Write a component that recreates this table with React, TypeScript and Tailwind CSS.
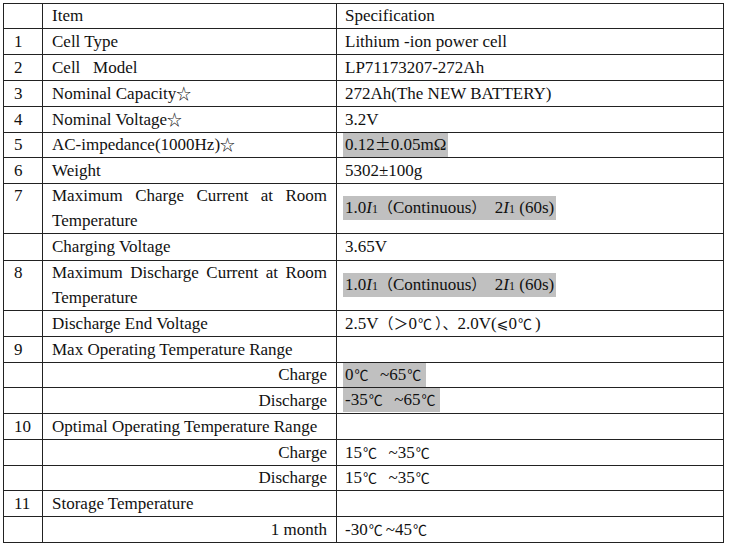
import React from "react";

type Row = {
  no?: string;
  item: React.ReactNode;
  spec?: React.ReactNode;
  right?: boolean;
  justify?: boolean;
  mark?: boolean;
  size?: "s" | "m" | "l";
};

const cjk = "font-['Noto_Sans_CJK_SC',sans-serif] leading-[0px]";

function Star() {
  return <span className={`${cjk} text-[15px]`}>☆</span>;
}

function Deg() {
  return <span className={`${cjk} text-[14px] ml-[1px] mr-[3px]`}>℃</span>;
}

function Current() {
  return (
    <>
      1.0<i>I</i>
      <span className="text-[12px] leading-[0px]">1</span>
      <span className={`${cjk} text-[15px]`}>（</span>
      Continuous
      <span className={`${cjk} text-[15px]`}>）</span>
      {"\u00a0\u00a0"}2<i>I</i>
      <span className="text-[12px] leading-[0px]">1</span> (60s)
    </>
  );
}

function Range({ from, to, gap = "\u00a0 ~" }: { from: string; to: string; gap?: string }) {
  return (
    <>
      {from}
      <Deg />
      {gap}
      {to}
      <Deg />
    </>
  );
}

const rows: Row[] = [
  { no: "1", item: "Cell Type", spec: "Lithium -ion power cell" },
  { no: "2", item: "Cell\u00a0\u00a0\u00a0Model", spec: "LP71173207-272Ah" },
  { no: "3", item: <>Nominal Capacity<Star /></>, spec: "272Ah(The NEW BATTERY)" },
  { no: "4", item: <>Nominal Voltage<Star /></>, spec: "3.2V" },
  {
    no: "5",
    item: <>AC-impedance(1000Hz)<Star /></>,
    spec: (
      <>
        0.12<span className={`${cjk} text-[16px]`}>±</span>0.05mΩ
      </>
    ),
    mark: true,
    size: "s",
  },
  { no: "6", item: "Weight", spec: "5302±100g" },
  { no: "7", item: "Maximum Charge Current at Room Temperature", spec: <Current />, justify: true, mark: true },
  { item: "Charging Voltage", spec: "3.65V", size: "l" },
  { no: "8", item: "Maximum Discharge Current at Room Temperature", spec: <Current />, justify: true, mark: true },
  {
    item: "Discharge End Voltage",
    spec: (
      <>
        2.5V<span className={`${cjk} text-[15px]`}>（＞</span>0<Deg />
        <span className={`${cjk} text-[15px]`}>）、</span>2.0V(
        <span className="font-['DejaVu_Sans',sans-serif] text-[14px] leading-[0px]">⩽</span>0<Deg />)
      </>
    ),
  },
  { no: "9", item: "Max Operating Temperature Range" },
  { item: "Charge", spec: <Range from="0" to="65" />, right: true, mark: true, size: "s" },
  { item: "Discharge", spec: <Range from="-35" to="65" />, right: true, mark: true },
  { no: "10", item: "Optimal Operating Temperature Range" },
  { item: "Charge", spec: <Range from="15" to="35" />, right: true },
  { item: "Discharge", spec: <Range from="15" to="35" />, right: true, size: "s" },
  { no: "11", item: "Storage Temperature" },
  { item: "1 month", spec: <Range from="-30" to="45" gap="~" />, right: true },
];

const lead = { s: "leading-[24px]", m: "leading-[25px]", l: "leading-[26px]" };

export default function App() {
  return (
    <div className="bg-white w-[731px] h-[547px] pt-[3px] pl-[3px]">
      <table className="table-fixed border-collapse w-[720px] text-[17px] text-[#111] font-['Liberation_Serif',serif]">
        <colgroup>
          <col className="w-[39px]" />
          <col className="w-[294px]" />
          <col className="w-[387px]" />
        </colgroup>
        <tbody>
          <tr className="leading-[24px]">
            <td className="border border-[#222] px-[9px] align-top" />
            <td className="border border-[#222] px-[9px] align-top">Item</td>
            <td className="border border-[#222] px-[8px] align-top">Specification</td>
          </tr>
          {rows.map((r, i) => (
            <tr key={i} className={r.justify ? "leading-[24.5px]" : lead[r.size ?? "m"]}>
              <td className="border border-[#222] pl-[10px] pr-0 align-top">{r.no}</td>
              <td
                className={`border border-[#222] pl-[9px] pr-[9px] align-top ${
                  r.right ? "text-right" : r.justify ? "text-justify" : "text-left"
                }`}
              >
                {r.item}
              </td>
              <td className="border border-[#222] pl-[8px] pr-[8px] align-middle whitespace-pre">
                {r.spec &&
                  (r.mark ? (
                    <span className="inline-block align-top bg-[#c0c0c0] -ml-[2px] px-[2px] leading-[24px]">
                      {r.spec}
                    </span>
                  ) : (
                    r.spec
                  ))}
              </td>
            </tr>
          ))}
        </tbody>
      </table>
    </div>
  );
}
